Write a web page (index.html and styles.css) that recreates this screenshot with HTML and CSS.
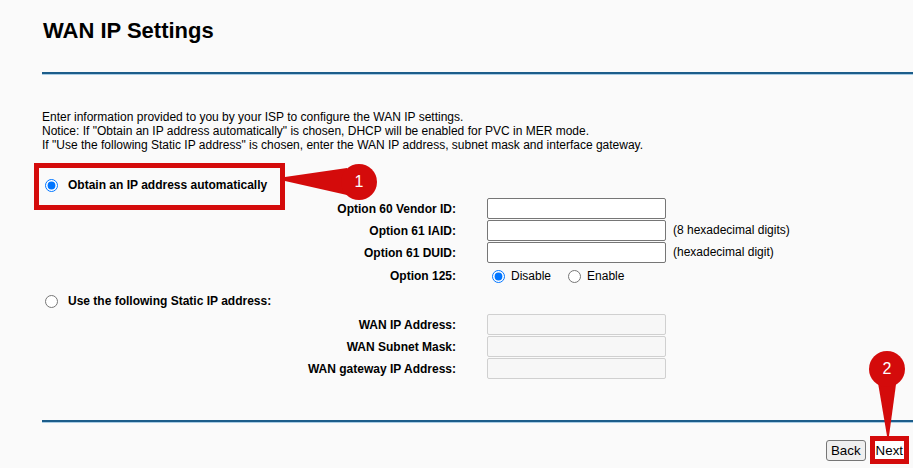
FILE: index.html
```html
<!DOCTYPE html>
<html lang="en">
  <head>
    <meta charset="UTF-8" />
    <title>WAN IP Settings</title>
    <link rel="stylesheet" href="styles.css">
  </head>
  <body>
    <div class="page">
      <h1 class="title">WAN IP Settings</h1>
      <div class="rule"></div>

      <p class="intro">
        Enter information provided to you by your ISP to configure the WAN IP settings.<br />
        Notice: If "Obtain an IP address automatically" is chosen, DHCP will be enabled for PVC in MER mode.<br />
        If "Use the following Static IP address" is chosen, enter the WAN IP address, subnet mask and interface gateway.
      </p>

      <label class="mode-row mode-auto">
        <input type="radio" name="wanMode" checked />
        <span>Obtain an IP address automatically</span>
      </label>

      <div class="field-grid field-grid-dhcp">
        <label class="field-label" for="opt60">Option 60 Vendor ID:</label>
        <input class="field-input" type="text" id="opt60" />
        <span class="field-note"></span>

        <label class="field-label" for="opt61iaid">Option 61 IAID:</label>
        <input class="field-input" type="text" id="opt61iaid" />
        <span class="field-note">(8 hexadecimal digits)</span>

        <label class="field-label" for="opt61duid">Option 61 DUID:</label>
        <input class="field-input" type="text" id="opt61duid" />
        <span class="field-note">(hexadecimal digit)</span>

        <span class="field-label">Option 125:</span>
        <div class="choice-group">
          <label class="choice"><input type="radio" name="opt125" checked /><span>Disable</span></label>
          <label class="choice"><input type="radio" name="opt125" /><span>Enable</span></label>
        </div>
        <span class="field-note"></span>
      </div>

      <label class="mode-row mode-static">
        <input type="radio" name="wanMode" />
        <span>Use the following Static IP address:</span>
      </label>

      <div class="field-grid">
        <label class="field-label" for="wanIp">WAN IP Address:</label>
        <input class="field-input" type="text" id="wanIp" disabled />
        <span class="field-note"></span>

        <label class="field-label" for="wanMask">WAN Subnet Mask:</label>
        <input class="field-input" type="text" id="wanMask" disabled />
        <span class="field-note"></span>

        <label class="field-label" for="wanGw">WAN gateway IP Address:</label>
        <input class="field-input" type="text" id="wanGw" disabled />
        <span class="field-note"></span>
      </div>

      <div class="rule rule-bottom"></div>

      <div class="actions">
        <button class="btn">Back</button>
        <button class="btn btn-next">Next</button>
      </div>
    </div>

    <!-- annotations drawn over the page -->
    <div class="mark mark-auto"></div>
    <div class="callout callout-1">
      <svg width="96" height="42" viewBox="0 0 96 42">
        <polygon points="2,16 64,7 64,34 2,20" fill="#d40b0b" />
        <circle cx="76" cy="21" r="18" fill="#d40b0b" />
      </svg>
      <span class="callout-num">1</span>
    </div>
    <div class="callout callout-2">
      <svg width="40" height="88" viewBox="0 0 40 88">
        <polygon points="10,28 30,28 22,87 20,87" fill="#d40b0b" />
        <circle cx="20" cy="20" r="18" fill="#d40b0b" />
      </svg>
      <span class="callout-num">2</span>
    </div>
  </body>
</html>
```

FILE: styles.css
```css
:root {
  --font-default: 'Liberation Sans', Arial, sans-serif;
  --rule-dark: #1c5d8a;
  --rule-light: #a9cce4;
  --mark-red: #d40b0b;
}
* {
  box-sizing: border-box;
}
html,
body {
  margin: 0;
  padding: 0;
  background-color: #fafafa;
  color: #000;
  font-family: var(--font-default);
  font-size: 12px;
}
body {
  position: relative;
  width: 913px;
  height: 468px;
  overflow: hidden;
}
.page {
  padding-left: 42px;
}
.title {
  margin: 18px 0 0;
  padding-left: 1px;
  font-size: 22px;
  line-height: 26px;
  font-weight: 700;
}
.rule {
  margin-top: 28px;
  height: 3px;
  border-top: 2px solid var(--rule-dark);
  border-bottom: 1px solid var(--rule-light);
}
.rule-bottom {
  margin-top: 40px;
}
.intro {
  margin: 35px 0 0;
  line-height: 14px;
}

/* radio rows for the two modes */
.mode-row {
  display: flex;
  align-items: center;
  height: 26px;
  font-weight: 700;
}
.mode-auto {
  margin-top: 20px;
}
.mode-static {
  height: 26px;
}
.mode-row input[type='radio'] {
  margin: 0 10px 0 3px;
  width: 13px;
  height: 13px;
}

/* label / input / note grid */
.field-grid {
  display: grid;
  grid-template-columns: 445px 179px auto;
  grid-auto-rows: 22px;
}
.field-grid-dhcp {
  grid-template-rows: 22px 22px 22px 24px;
}
.field-label {
  align-self: center;
  padding-right: 31px;
  text-align: right;
  font-weight: 700;
}
.field-input {
  width: 179px;
  height: 21px;
  margin: 0;
  padding: 0 3px;
  font-family: var(--font-default);
  font-size: 12px;
  background-color: #fff;
  border: 1px solid #767676;
  border-radius: 2px;
}
.field-input:disabled {
  background-color: #f7f7f7;
  border-color: #d0d0d0;
}
.field-note {
  align-self: center;
  padding-left: 7px;
  margin-top: -2px;
}
.choice-group {
  display: flex;
  align-items: center;
  gap: 17px;
  padding-left: 5px;
}
.choice {
  display: flex;
  align-items: center;
  gap: 6px;
}
.choice input[type='radio'] {
  margin: 0;
  width: 13px;
  height: 13px;
}

/* bottom buttons */
.actions {
  display: flex;
  justify-content: flex-end;
  align-items: center;
  gap: 4px;
  height: 28px;
  margin-top: 13px;
  padding-right: 4px;
}
.btn {
  height: 21px;
  padding: 0 4px;
  font-family: var(--font-default);
  font-size: 13.33px;
  color: #000;
  background-color: #efefef;
  border: 1px solid #767676;
  border-radius: 3px;
}
.btn-next {
  height: 28px;
  padding: 0 1px;
  background-color: #fff;
  border: 5px solid var(--mark-red);
  border-radius: 0;
}

/* annotation overlays */
.mark {
  position: absolute;
  border: 5px solid var(--mark-red);
}
.mark-auto {
  left: 34px;
  top: 163px;
  width: 251px;
  height: 47px;
}
.callout {
  position: absolute;
}
.callout svg {
  display: block;
}
.callout-num {
  position: absolute;
  width: 36px;
  text-align: center;
  color: #fff;
  font-size: 16px;
  line-height: 20px;
}
.callout-1 {
  left: 283px;
  top: 161px;
}
.callout-1 .callout-num {
  left: 58px;
  top: 11px;
}
.callout-2 {
  left: 867px;
  top: 349px;
}
.callout-2 .callout-num {
  left: 2px;
  top: 10px;
}
```
